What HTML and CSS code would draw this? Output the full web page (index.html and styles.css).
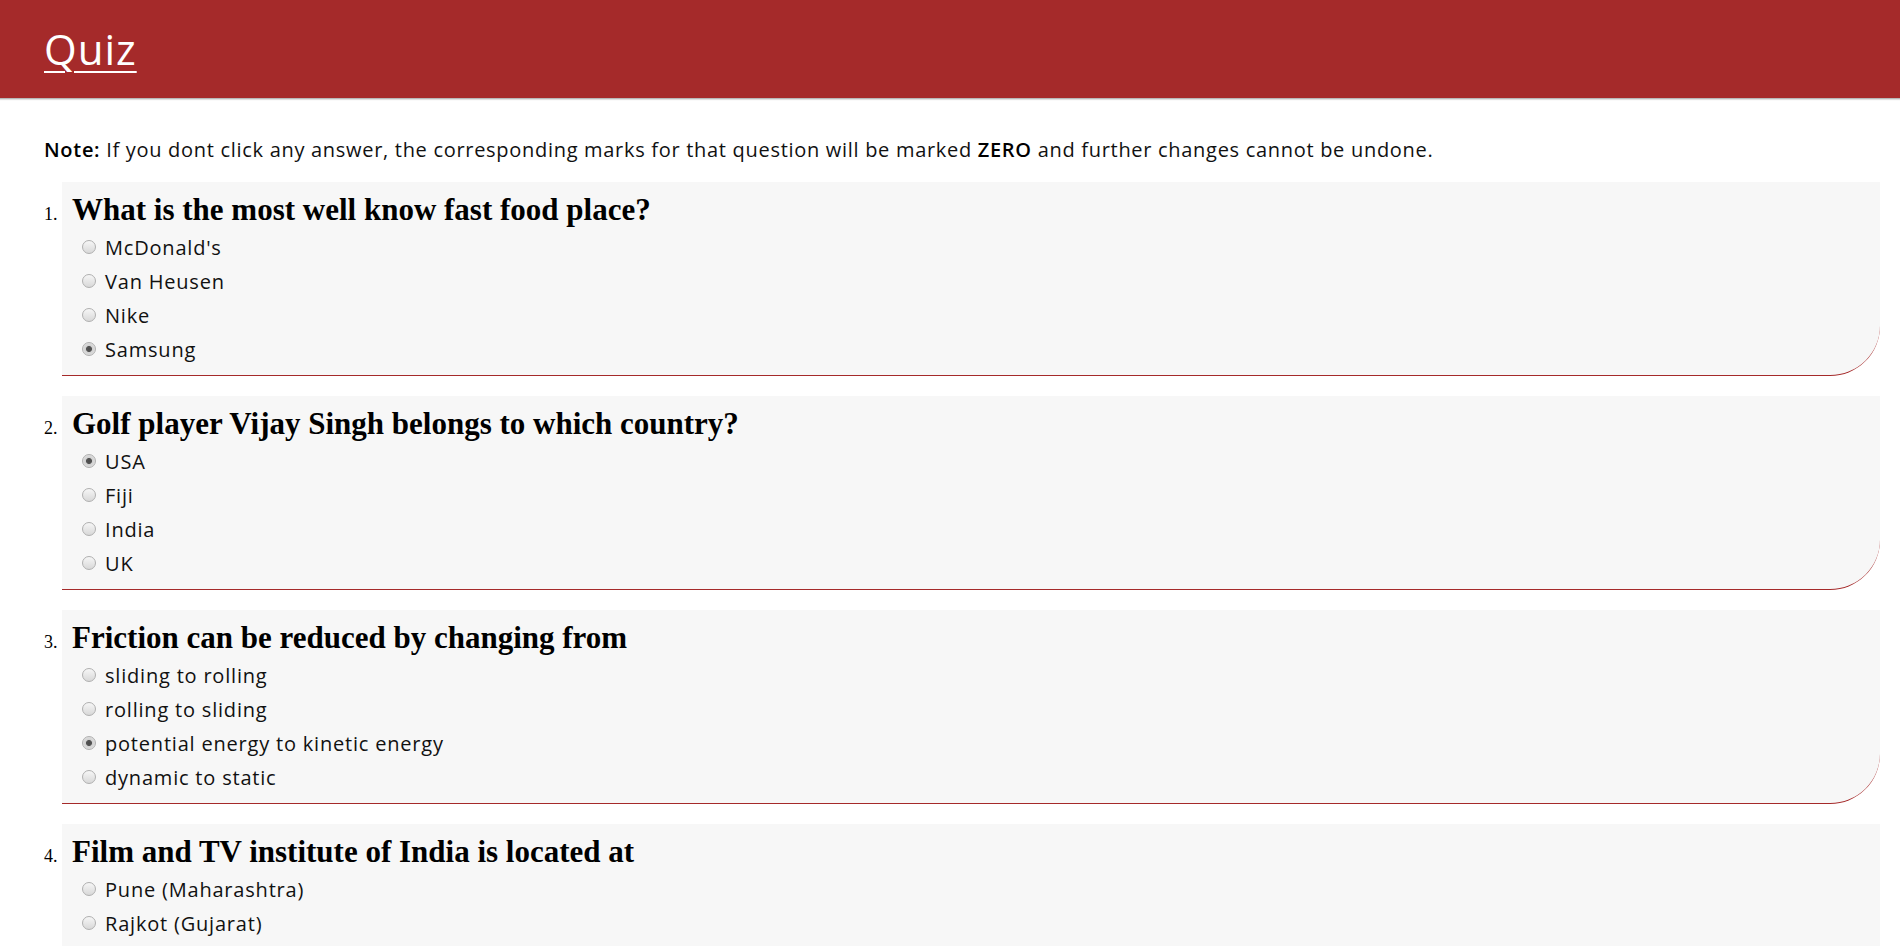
FILE: index.html
```html
<!DOCTYPE html>
<html lang="en">
<head>
<meta charset="utf-8">
<title>Quiz</title>
<link rel="stylesheet" href="styles.css">
</head>
<body>
<header class="topbar">
  <a class="brand" href="#">Quiz</a>
</header>
<main class="content">
  <p class="note"><b>Note:</b> If you dont click any answer, the corresponding marks for that question will be marked <b>ZERO</b> and further changes cannot be undone.</p>
  <ol class="questions">
    <li class="question">
      <h2 class="question-title">What is the most well know fast food place?</h2>
      <ul class="options">
        <li><label><input type="radio" name="q1"> McDonald's</label></li>
        <li><label><input type="radio" name="q1"> Van Heusen</label></li>
        <li><label><input type="radio" name="q1"> Nike</label></li>
        <li><label><input type="radio" name="q1" checked> Samsung</label></li>
      </ul>
    </li>
    <li class="question">
      <h2 class="question-title">Golf player Vijay Singh belongs to which country?</h2>
      <ul class="options">
        <li><label><input type="radio" name="q2" checked> USA</label></li>
        <li><label><input type="radio" name="q2"> Fiji</label></li>
        <li><label><input type="radio" name="q2"> India</label></li>
        <li><label><input type="radio" name="q2"> UK</label></li>
      </ul>
    </li>
    <li class="question">
      <h2 class="question-title">Friction can be reduced by changing from</h2>
      <ul class="options">
        <li><label><input type="radio" name="q3"> sliding to rolling</label></li>
        <li><label><input type="radio" name="q3"> rolling to sliding</label></li>
        <li><label><input type="radio" name="q3" checked> potential energy to kinetic energy</label></li>
        <li><label><input type="radio" name="q3"> dynamic to static</label></li>
      </ul>
    </li>
    <li class="question">
      <h2 class="question-title">Film and TV institute of India is located at</h2>
      <ul class="options">
        <li><label><input type="radio" name="q4"> Pune (Maharashtra)</label></li>
        <li><label><input type="radio" name="q4"> Rajkot (Gujarat)</label></li>
        <li><label><input type="radio" name="q4"> Bhubaneshwar (Odisha)</label></li>
        <li><label><input type="radio" name="q4"> Perambur (Tamilnadu)</label></li>
      </ul>
    </li>
  </ol>
</main>
</body>
</html>
```
FILE: styles.css
```css
html {
  scrollbar-width: none;
}
html::-webkit-scrollbar {
  display: none;
}
body {
  margin: 0;
  font-family: "Open Sans", "Liberation Sans", sans-serif;
  color: #111;
  background: #fff;
}
.topbar {
  height: 98px;
  background: #a52a2a;
  border-bottom: 1px solid #b8b8b8;
  box-shadow: 0 1px 1px rgba(0, 0, 0, 0.12);
  display: flex;
  align-items: center;
  padding: 0 44px;
}
.brand {
  color: #fff;
  font-size: 42px;
  letter-spacing: 1px;
  line-height: 50px;
  text-decoration: underline;
  text-decoration-thickness: 2px;
  text-underline-offset: 6px;
  font-family: "Open Sans", "Liberation Sans", sans-serif;
}
.content {
  padding: 0 20px 0 44px;
}
.note {
  margin: 39px 0 20px;
  font-size: 20px;
  letter-spacing: 0.7px;
  line-height: 24px;
  color: #111;
}
.note b {
  font-weight: 600;
  color: #000;
}
.questions {
  margin: 0;
  padding: 0 0 0 18px;
}
.question {
  background: #f7f7f7;
  padding: 10px 0 9px 10px;
  margin-bottom: 20px;
  border-bottom: 1px solid #a52a2a;
  border-bottom-right-radius: 50px;
}
.question::marker {
  font-family: "Liberation Serif", serif;
  font-size: 18px;
  font-weight: normal;
  color: #000;
}
.question-title {
  margin: 0;
  font-family: "Liberation Serif", serif;
  font-weight: bold;
  font-size: 31px;
  line-height: 36px;
  color: #000;
}
.options {
  list-style: none;
  margin: 2px 0 0;
  padding: 0 0 0 5px;
}
.options li {
  height: 34px;
  display: flex;
  align-items: center;
}
.options label {
  display: flex;
  align-items: center;
  font-size: 20px;
  letter-spacing: 0.8px;
  color: #111;
}
.options input {
  appearance: none;
  -webkit-appearance: none;
  width: 14px;
  height: 14px;
  margin: 0 9px 0 5px;
  border-radius: 50%;
  border: 1px solid #b0b0b0;
  background: linear-gradient(#f6f6f6, #d8d8d8);
  box-sizing: border-box;
}
.options input:checked {
  background: radial-gradient(circle, #4a4a4a 0, #555 2.6px, #d0d0d0 3.4px, #ececec 100%);
}
```
